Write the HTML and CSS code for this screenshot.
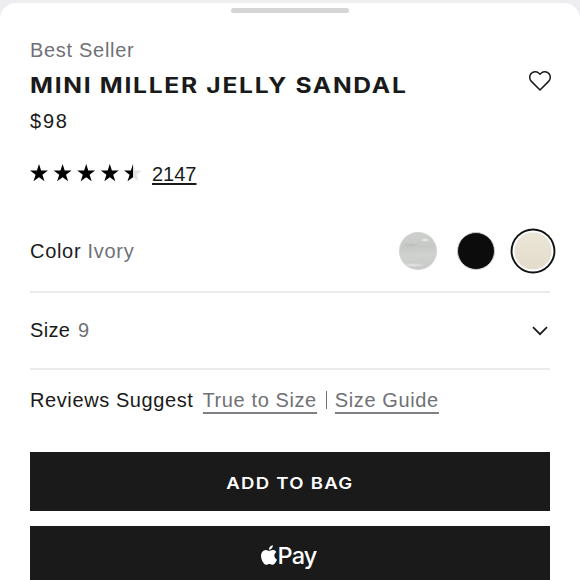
FILE: index.html
```html
<!DOCTYPE html>
<html lang="en">
<head>
    <meta charset="UTF-8">
    <meta name="viewport" content="width=device-width, initial-scale=1.0">
    <title>Mini Miller Jelly Sandal</title>
    <link rel="stylesheet" href="styles.css">
</head>
<body>
    <div class="sheet">
        <div class="handle"></div>
        <div class="badge-text gray">Best Seller</div>
        <div class="title-row">
            <h1 class="title">MINI MILLER JELLY SANDAL</h1>
            <svg class="heart" viewBox="0 0 24 22" fill="none" stroke="currentColor" stroke-width="1.5" stroke-linejoin="round">
                <path d="M12 20L3.4 11.4C1.2 9 1.2 5.4 3.2 3.4C5.3 1.2 8.7 1.3 10.6 3L12 4.3L13.4 3C15.3 1.3 18.7 1.2 20.8 3.4C22.8 5.4 22.8 9 20.6 11.4Z" />
            </svg>
        </div>
        <div class="price">$98</div>
        <div class="rating">
            <svg class="stars" viewBox="0 0 112 18">
                <defs>
                    <path id="star" d="M9 0L11.1 6.6H18L12.4 10.7L14.5 17.2L9 13.2L3.5 17.2L5.6 10.7L0 6.6H6.9Z" />
                    <linearGradient id="half">
                        <stop offset="50%" stop-color="#000" />
                        <stop offset="50%" stop-color="#e3e3e3" />
                    </linearGradient>
                </defs>
                <use href="#star" />
                <use href="#star" x="23.6" />
                <use href="#star" x="47.2" />
                <use href="#star" x="70.8" />
                <use href="#star" x="94" fill="url(#half)" />
            </svg>
            <a class="count" href="#">2147</a>
        </div>
        <div class="color-row">
            <div class="label">Color <span class="gray">Ivory</span></div>
            <div class="swatches">
                <span class="swatch clear"></span>
                <span class="swatch black"></span>
                <span class="swatch ivory"></span>
            </div>
        </div>
        <div class="size-row">
            <div class="label size-label">Size <span class="gray">9</span></div>
            <svg class="chevron" viewBox="0 0 16 10" fill="none" stroke="currentColor" stroke-width="1.7">
                <path d="M1 1.2L8 8.2L15 1.2" />
            </svg>
        </div>
        <div class="fit-row">
            <span class="fit-label">Reviews Suggest</span>
            <a class="fit-link true-size" href="#">True to Size</a>
            <span class="divider"></span>
            <a class="fit-link guide" href="#">Size Guide</a>
        </div>
        <button class="button add"><span class="add-text">ADD TO BAG</span></button>
        <button class="button pay">
            <svg class="apple" viewBox="2.2 0 19.6 24" fill="currentColor">
                <path d="M12.152 6.896c-.948 0-2.415-1.078-3.96-1.04-2.04.027-3.91 1.183-4.961 3.014-2.117 3.675-.546 9.103 1.519 12.09 1.013 1.454 2.208 3.09 3.792 3.039 1.52-.065 2.09-.987 3.935-.987 1.831 0 2.35.987 3.96.948 1.637-.026 2.676-1.48 3.676-2.948 1.156-1.688 1.636-3.325 1.662-3.415-.039-.013-3.182-1.221-3.22-4.857-.026-3.04 2.48-4.494 2.597-4.559-1.429-2.09-3.623-2.324-4.39-2.376-2-.156-3.675 1.09-4.61 1.09zM15.53 3.83c.843-1.012 1.4-2.427 1.245-3.83-1.207.052-2.662.805-3.532 1.818-.78.896-1.454 2.338-1.273 3.714 1.338.104 2.715-.688 3.559-1.701" />
            </svg>
            <span>Pay</span>
        </button>
    </div>
</body>
</html>
```
FILE: styles.css
```css
* {
    box-sizing: border-box;
}

body {
    margin: 0;
    padding-top: 3px;
    height: 580px;
    overflow: hidden;
    background-color: #eeeef0;
    font-family: "Liberation Sans", Arial, sans-serif;
    font-size: 20px;
    line-height: 24px;
    letter-spacing: 0.7px;
    color: #1a1a1a;
}

.sheet {
    height: 590px;
    padding: 5px 30px 0;
    border-radius: 16px 16px 0 0;
    background-color: #fff;
}

.handle {
    width: 118px;
    height: 5px;
    margin: 0 auto;
    border-radius: 3px;
    background-color: #d5d5d5;
}

.gray {
    color: #707176;
}

.badge-text {
    margin-top: 25px;
}

.title-row {
    display: flex;
    justify-content: space-between;
    height: 36px;
    padding-top: 6px;
}

/* wide caps */
.title {
    margin: 0;
    font-family: Inter, sans-serif;
    font-size: 21px;
    font-weight: 700;
    line-height: 35px;
    letter-spacing: 1.45px;
    white-space: nowrap;
    transform: scaleX(1.172);
    transform-origin: left center;
}

.heart {
    width: 24px;
    height: 22px;
    margin: 2px -2px 0 0;
}

.price {
    margin-top: 11px;
    letter-spacing: 1.8px;
}

.rating {
    display: flex;
    align-items: center;
    height: 26px;
    margin-top: 28px;
}

.stars {
    width: 112px;
    height: 18px;
    margin: 0 10px 3px 0;
}

.count {
    color: inherit;
    letter-spacing: 0;
    text-decoration-thickness: 1.5px;
    text-underline-offset: 2px;
}

.color-row {
    display: flex;
    justify-content: space-between;
    align-items: center;
    height: 83px;
    margin-top: 23px;
    border-bottom: 2px solid #ebebeb;
}

.swatches {
    display: flex;
    align-items: center;
    gap: 20px;
    margin-right: -1px;
}

.swatch {
    width: 38px;
    height: 38px;
    border-radius: 50%;
}

.clear {
    background:
        radial-gradient(ellipse 5px 2px at 26px 8px, #f0f1f0, transparent),
        radial-gradient(ellipse 9px 2px at 12px 13px, #b9bbb9, transparent),
        radial-gradient(ellipse 13px 2px at 14px 33px, #e6e7e6, transparent),
        linear-gradient(176deg, #cfd1cf, #c6c9c6 40%, #d0d2d0 60%, #c6c8c6);
    box-shadow: inset 0 0 0 1px #d3d3d3;
}

.black {
    background-color: #0c0c0c;
    border: 1px solid #ccc;
}

.ivory {
    width: 36px;
    height: 36px;
    background: linear-gradient(#ece6d8, #e3dccb);
    box-shadow: 0 0 0 1px #f3f1ec, 0 0 0 2.5px #fff, 0 0 0 4.4px #111;
}

.size-row {
    display: flex;
    justify-content: space-between;
    align-items: center;
    height: 77px;
    padding-right: 2px;
    border-bottom: 2px solid #ebebeb;
}

.size-label {
    padding-bottom: 1px;
    letter-spacing: 0.3px;
}

.size-label .gray {
    margin-left: 2px;
}

.chevron {
    width: 16px;
    height: 10px;
}

.fit-row {
    display: flex;
    align-items: center;
    height: 82px;
    padding-bottom: 23px;
    letter-spacing: 0.6px;
}

.fit-link {
    height: 29px;
    padding-top: 3px;
    border-bottom: 2px solid #808084;
    color: #707176;
    letter-spacing: 0.6px;
    text-decoration: none;
    white-space: nowrap;
}

.fit-label {
    height: 29px;
    padding-top: 3px;
}

.true-size {
    margin-left: 9px;
}

.divider {
    width: 1px;
    height: 18px;
    margin: 0 8px 0 9px;
    background-color: #707176;
}

.button {
    display: flex;
    align-items: center;
    justify-content: center;
    width: 100%;
    height: 59px;
    padding: 0;
    border: none;
    background-color: #1a1a1a;
    color: #fff;
}

.add {
    padding-top: 3px;
    font-family: Inter, sans-serif;
    font-size: 16px;
    font-weight: 600;
    letter-spacing: 1.1px;
}

.add-text {
    transform: scaleX(1.16);
}

.pay {
    gap: 1px;
    margin-top: 15px;
    padding-right: 3px;
    font-family: Inter, sans-serif;
    font-size: 23.5px;
    font-weight: 500;
    letter-spacing: -0.9px;
}

.apple {
    width: 16px;
    height: 20px;
    margin-bottom: 1px;
}
```
